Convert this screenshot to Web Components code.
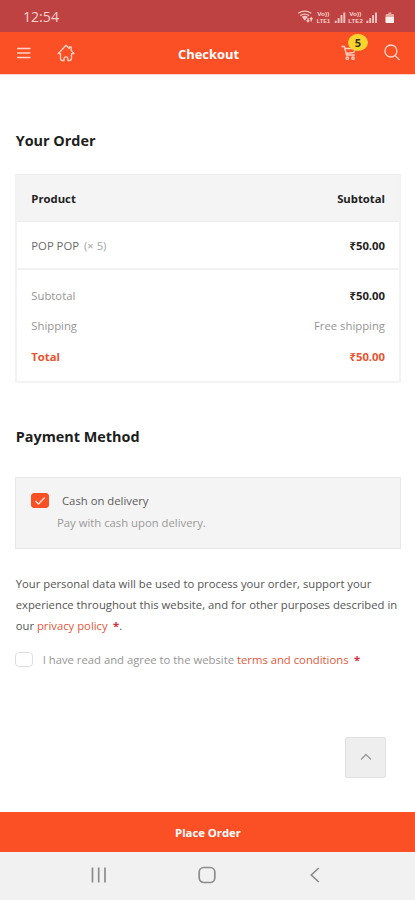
<!DOCTYPE html>
<html lang="en">
<head>
<meta charset="utf-8">
<title>Checkout</title>
<style>
body { margin: 0; background: #fff; }
</style>
</head>
<body>
<checkout-page></checkout-page>
<script>
function define(name, html) {
  const template = document.createElement('template');
  template.innerHTML = html;
  customElements.define(name, class extends HTMLElement {
    constructor() {
      super();
      this.attachShadow({ mode: 'open' }).append(template.content.cloneNode(true));
    }
  });
}

define('status-bar', `
<style>
:host { display: flex; align-items: center; justify-content: space-between; height: 32px; box-sizing: border-box; padding: 1px 20px 0 23px; background: #bf4242; color: #f6d3cd; font-size: 14.1px; }
svg { display: block; }
</style>
<span>12:54</span>
<svg width="98" height="16" viewBox="297 8 98 16" fill="none" stroke="#f1c5bf" stroke-width="1.3">
  <path d="M298.2 12.2q6.5-4 13 0M300.3 14.6q4.4-3 8.800 0"/>
  <path d="M301.8 15.800q3-2 6 0l-3 4z" fill="#f1c5bf" stroke="none"/>
  <path d="M308 17v3.500m-1.300-1.300l1.300 1.500 1.300-1.500M311.200 20.500v-3.500m-1.300 1.300l1.300-1.500 1.300 1.500"/>
  <g fill="#f6d3cd" stroke="none" font-family="Liberation Sans, sans-serif" font-weight="700" font-size="5.700">
    <text x="317.300" y="15.200" textLength="12" lengthAdjust="spacingAndGlyphs">Vo))</text>
    <text x="316.700" y="22" textLength="13.500" lengthAdjust="spacingAndGlyphs">LTE1</text>
    <text x="349.300" y="15.200" textLength="12" lengthAdjust="spacingAndGlyphs">Vo))</text>
    <text x="348.300" y="22" textLength="14.500" lengthAdjust="spacingAndGlyphs">LTE2</text>
  </g>
  <path d="M335.700 22v-2.200M338.600 22v-5M341.500 22v-8M344.300 22V11.500M367.400 22v-2.200M370.200 22v-5M373.100 22v-8M376 22V11.500" stroke-width="1.900"/>
  <path d="M388.300 11.500h3v1.500h1.700q1 0 1 1v7q0 1-1 1h-6.400q-1 0-1-1v-7q0-1 1-1h1.700z" fill="#e5a9a1" stroke="none"/>
  <path d="M385.600 16h8.400v5q0 1-1 1h-6.400q-1 0-1-1z" fill="#fff1ed" stroke="none"/>
</svg>`);

define('count-badge', `
<style>
:host { display: flex; align-items: center; justify-content: center; width: 20px; height: 17px; border-radius: 50%; background: #fbd52f; color: #333310; font-size: 11px; font-weight: 700; line-height: 17px; }
</style><slot></slot>`);

define('app-header', `
<style>
:host { display: grid; grid-template-columns: 1fr auto 1fr; align-items: center; height: 43px; padding: 0 15px 0 17px; background: #fb4f26; color: #fff; border-bottom: 1px solid #fbd3c8; box-sizing: border-box; }
h1 { margin: 1px 0 0; font-size: 12.900px; font-weight: 700; line-height: 20px; }
.side { display: flex; align-items: center; }
.left { gap: 26px; }
.right { justify-content: flex-end; gap: 27.500px; }
svg { display: block; fill: none; stroke: #ffd3c4; stroke-width: 1.300; }
.cart { position: relative; }
count-badge { position: absolute; left: 7.500px; top: -11px; }
</style>
<div class="side left">
  <svg width="14" height="14" viewBox="0 0 14 14"><path d="M0 2.500h13.500M0 7h13.500M0 11.500h13.500"/></svg>
  <svg width="18" height="18" viewBox="0 0 18 18" stroke-linejoin="round" stroke-linecap="round"><path d="M3.500 9.700H1.200L9 1.300l3.200 3.200V3h2v3.400l2.800 3.300h-2.500v5q0 1.800-1.800 1.800h-1.800v-2q0-1.700-1.900-1.700t-1.900 1.700v2H5.300q-1.800 0-1.800-1.800z"/></svg>
</div>
<h1>Checkout</h1>
<div class="side right">
  <div class="cart">
    <svg width="16" height="16" viewBox="0 0 16 16"><path d="M.500 1.500h2.800l2.200 8.500h8.200M3.800 3.500h10.200l-1 4-8 1"/><circle cx="6.300" cy="13.200" r="1.200"/><circle cx="12" cy="13.200" r="1.200"/></svg>
    <count-badge>5</count-badge>
  </div>
  <svg width="16" height="19" viewBox="0 0 16 19"><circle cx="6.900" cy="7" r="6"/><path d="M11 11.500l4.500 4.500"/></svg>
</div>`);

define('section-title', `
<style>
:host { display: block; height: 24px; color: #1d1d1d; font-size: 14.420px; font-weight: 700; line-height: 24px; }
</style><slot></slot>`);

define('order-row', `
<style>
:host { display: flex; align-items: center; justify-content: space-between; height: 30.300px; color: #969696; }
:host([kind=head]) { height: 46px; background: #f4f4f4; border-bottom: 1px solid #ececec; color: #222; font-weight: 700; margin: 0 -14px; padding: 0 14px; }
:host([kind=item]) { height: 48px; border-bottom: 2px solid #f2f2f2; color: #6b6b6b; margin: 0 -14px 10.300px; padding: 0 14px; box-sizing: border-box; }
:host([kind=total]) { color: #e9532f; font-weight: 700; }
</style><slot></slot><slot name="value"></slot>`);

define('order-table', `
<style>
:host { display: block; height: 209px; box-sizing: border-box; border: 2px solid #f3f3f3; border-top: 1px solid #ececec; padding: 0 14px 0 14.300px; overflow: hidden; }
b { font-weight: 700; color: #222; }
i { font-style: normal; color: #a5a5a5; margin-left: 2px; }
span { white-space: pre; }
</style>
<order-row kind="head"><span>Product</span><span slot="value">Subtotal</span></order-row>
<order-row kind="item"><span>POP POP <i>(× 5)</i></span><b slot="value">₹50.00</b></order-row>
<order-row><span>Subtotal</span><b slot="value">₹50.00</b></order-row>
<order-row><span>Shipping</span><span slot="value">Free shipping</span></order-row>
<order-row kind="total"><span>Total</span><span slot="value">₹50.00</span></order-row>`);

define('check-box', `
<style>
:host { display: block; width: 18px; height: 15px; box-sizing: border-box; border: 1px solid #dedede; border-radius: 4px; background: #fff; }
:host([checked]) { border-color: #fb4f26; background: #fb4f26; border-radius: 3px; }
svg { display: none; }
:host([checked]) svg { display: block; }
</style>
<svg width="16" height="13" viewBox="0 0 16 13" fill="none" stroke="#ffe5dc" stroke-width="1.300"><path d="M3.500 7l3 3 6.200-6.500"/></svg>`);

define('payment-option', `
<style>
:host { display: block; height: 72px; box-sizing: border-box; border: 1px solid #e8e8e8; background: #f4f4f4; padding: 10px 15px 0; }
.row { display: flex; align-items: center; gap: 13px; height: 24px; color: #5c5c5c; }
.note { padding-left: 26px; height: 22px; line-height: 22px; color: #999; }
</style>
<div class="row"><check-box checked></check-box><slot></slot></div>
<div class="note"><slot name="note"></slot></div>`);

define('terms-link', `
<style>:host { display: inline; color: #e2583b; } b { color: #d32f3c; font-weight: 700; margin-left: 2.500px; }</style><slot></slot> <b>*</b>`);

define('terms-text', `
<style>
:host { display: block; color: #555; font-size: 11.290px; }
p { margin: 0; line-height: 20.800px; white-space: nowrap; }
.agree { display: flex; align-items: center; gap: 9.700px; height: 22px; margin-top: 12.600px; margin-left: -.700px; color: #969696; white-space: nowrap; }
</style>
<p>Your personal data will be used to process your order, support your<br>experience throughout this website, and for other purposes described in<br>our <terms-link>privacy policy</terms-link>.</p>
<div class="agree"><check-box></check-box><span>I have read and agree to the website <terms-link>terms and conditions</terms-link></span></div>`);

define('scroll-top', `
<style>
:host { display: flex; align-items: center; justify-content: center; width: 41px; height: 41px; box-sizing: border-box; border: 1px solid #e0e0e0; border-radius: 2px; background: #eee; }
</style>
<svg width="12" height="8" viewBox="0 0 12 8" fill="none" stroke="#999" stroke-width="1.300"><path d="M1 6.500l5-5 5 5"/></svg>`);

define('place-order', `
<style>
:host { display: flex; align-items: center; justify-content: center; height: 40px; background: #fb4f26; color: #fff; font-weight: 700; padding: 0 0 0 1px; box-sizing: border-box; }
</style><slot></slot>`);

define('nav-bar', `
<style>
:host { display: flex; align-items: center; justify-content: space-between; height: 48px; box-sizing: border-box; padding: 0 94px 2px 90px; background: #f1f1f1; }
svg { display: block; fill: none; stroke: #8c8c8c; stroke-width: 1.700; }
</style>
<svg width="18" height="18" viewBox="0 0 18 18"><path d="M2.500 1.500v15M8.700 1.500v15M15 1.500v15"/></svg>
<svg width="18" height="18" viewBox="2 0 18 18" overflow="visible"><rect x="1.200" y="1.500" width="15.600" height="15" rx="4.500"/></svg>
<svg width="12" height="18" viewBox="0 0 12 18"><path d="M9.800 2L2.300 9l7.500 7"/></svg>`);

define('checkout-page', `
<style>
:host { display: flex; flex-direction: column; width: 415px; height: 900px; overflow: hidden; background: #fff; font-family: "Open Sans", "Noto Sans", sans-serif; font-size: 11.300px; }
main { flex: 1; min-height: 0; padding: 54px 14px 0 15px; }
.first { margin-bottom: 21px; }
.second { margin: 42px 0 28px; }
section-title, terms-text { padding-left: .700px; }
terms-text { margin: 25px 0 66px; }
scroll-top { margin-left: 330px; }
</style>
<status-bar></status-bar>
<app-header></app-header>
<main>
  <section-title class="first">Your Order</section-title>
  <order-table></order-table>
  <section-title class="second">Payment Method</section-title>
  <payment-option>Cash on delivery<span slot="note">Pay with cash upon delivery.</span></payment-option>
  <terms-text></terms-text>
  <scroll-top></scroll-top>
</main>
<place-order>Place Order</place-order>
<nav-bar></nav-bar>`);
</script>
</body>
</html>
